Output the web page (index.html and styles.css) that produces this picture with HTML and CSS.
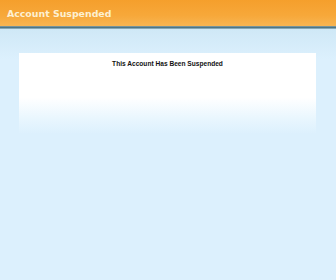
FILE: index.html
```html
<!DOCTYPE html>
<html>
<head>
<meta charset="utf-8">
<link rel="stylesheet" href="styles.css">
</head>
<body>
<div class="header">
  <h1 class="title">Account Suspended</h1>
</div>
<div class="rule"></div>
<div class="main">
  <div class="box">
    <p class="message">This Account Has Been Suspended</p>
  </div>
</div>
</body>
</html>
```
FILE: styles.css
```css
html, body {
  margin: 0;
  padding: 0;
}
body {
  background: #dcf0fd;
  font-family: "Liberation Sans", Arial, sans-serif;
  min-height: 280px;
}
.header {
  height: 26px;
  background: linear-gradient(180deg, #f59f2c 0%, #f7a83a 60%, #f8b552 100%);
  display: flex;
  align-items: center;
  padding-left: 7px;
}
.title {
  margin: 0;
  font-family: "DejaVu Sans", Verdana, sans-serif;
  font-size: 9.4px;
  font-weight: bold;
  color: #fdf0d2;
}
.rule {
  height: 3px;
  background: linear-gradient(180deg, #8aa2a6 0%, #4f7584 50%, #9fc0d0 100%);
}
.main {
  padding: 24px 20px 0 19px;
  background: linear-gradient(180deg, #cfe8f6 0px, #dcf0fd 30px);
}
.box {
  height: 74px;
  background: linear-gradient(180deg, #ffffff 0%, #ffffff 55%, #e8f6fe 82%, #dcf0fd 100%);
  display: flex;
  justify-content: center;
  padding-top: 7px;
}
.message {
  margin: 0;
  font-size: 6.6px;
  font-weight: bold;
  color: #111;
}
```
